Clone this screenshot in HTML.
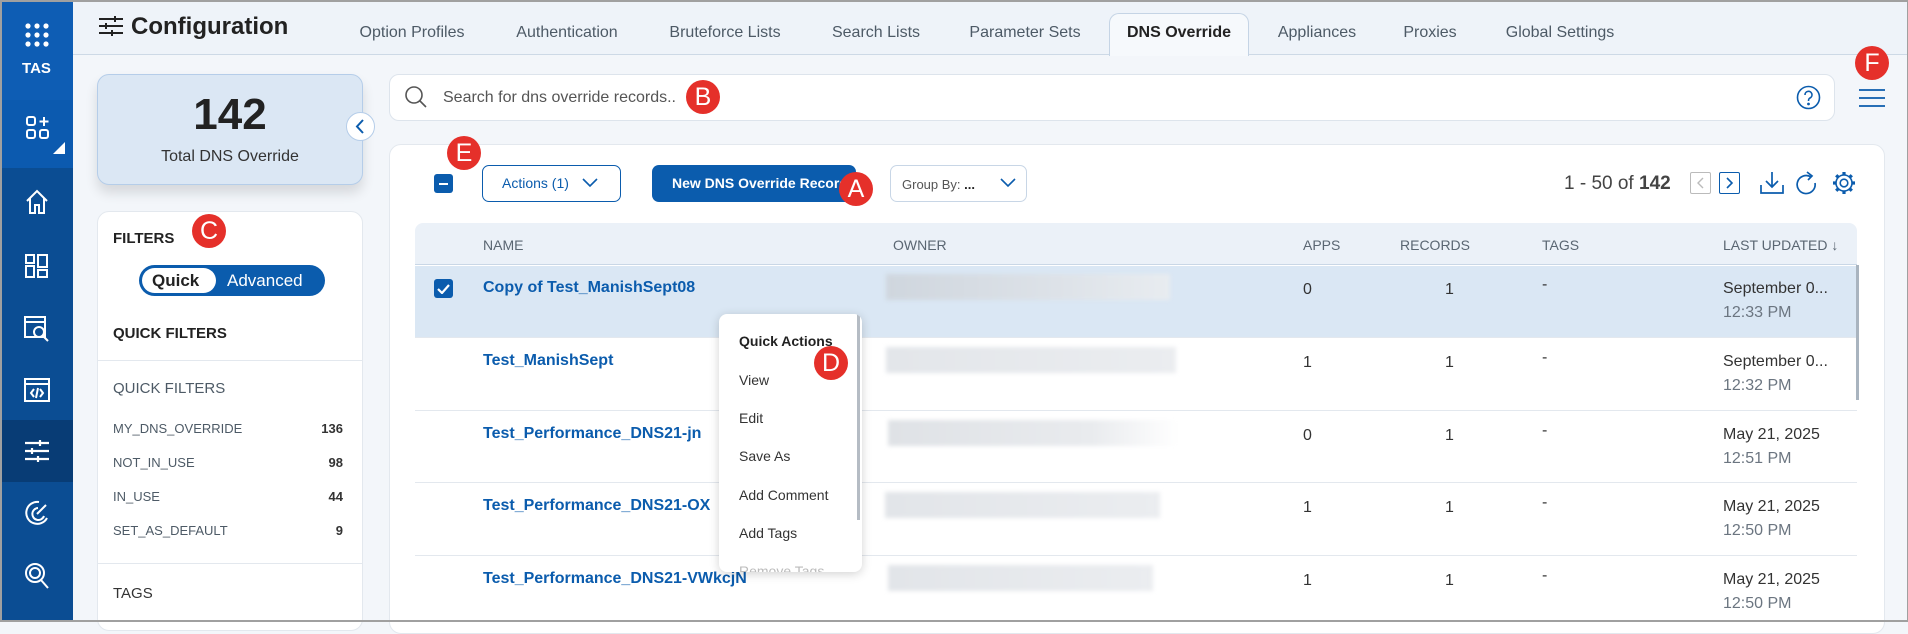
<!DOCTYPE html>
<html><head><meta charset="utf-8"><style>
*{margin:0;padding:0;box-sizing:border-box}
body{width:1908px;height:622px;overflow:hidden;background:#f3f6fa;font-family:"Liberation Sans",sans-serif;position:relative;color:#333}
.a{position:absolute}
.badge{position:absolute;width:34px;height:34px;border-radius:50%;background:#e5302a;color:#fff;font-size:25px;text-align:center;line-height:34px}
.tab{position:absolute;top:24px;font-size:16px;color:#4d5a66;transform:translateX(-50%);white-space:nowrap}
.side{position:absolute;left:0;width:73px}
.fi{position:absolute;left:16px;font-size:13px;color:#4d5a66}
.fc{position:absolute;right:20px;font-size:13px;color:#333;font-weight:bold}
.th{position:absolute;top:237px;font-size:14px;color:#5a6672}
.nm{position:absolute;left:483px;font-size:16px;color:#0b5cad;font-weight:bold}
.blur{position:absolute;height:26px;background:linear-gradient(90deg,#cfd6de,#dde2e8 60%,#e8ecf0);filter:blur(2px)}
.num{position:absolute;font-size:16px;color:#333}
.dt{position:absolute;left:1723px;font-size:16px;color:#333}
.tm{position:absolute;left:1723px;font-size:16px;color:#6b7580}
.mi{position:absolute;left:739px;font-size:14px;color:#333}
</style></head><body>
<div class="side" style="top:0;height:100px;background:#0e5db4"></div>
<div class="side" style="top:100px;height:68px;background:#0c5aaf"></div>
<div class="side" style="top:168px;height:454px;background:#0b4d93"></div>
<div class="side" style="top:420px;height:62px;background:#083c75"></div>
<svg class="a" style="left:24px;top:22px" width="26" height="26"><g fill="#fff"><circle cx="4" cy="4" r="2.6"/><circle cx="13" cy="4" r="2.6"/><circle cx="22" cy="4" r="2.6"/><circle cx="4" cy="13" r="2.6"/><circle cx="13" cy="13" r="2.6"/><circle cx="22" cy="13" r="2.6"/><circle cx="4" cy="22" r="2.6"/><circle cx="13" cy="22" r="2.6"/><circle cx="22" cy="22" r="2.6"/></g></svg>
<div class="a" style="left:0;width:73px;top:60px;text-align:center;color:#fff;font-weight:bold;font-size:15px">TAS</div>
<svg class="a" style="left:26px;top:116px" width="24" height="24" fill="none" stroke="#fff" stroke-width="2"><rect x="1" y="1" width="8" height="8" rx="2"/><rect x="1" y="14" width="8" height="8" rx="2"/><rect x="14" y="14" width="8" height="8" rx="2"/><path d="M18 1v9M13.5 5.5h9"/></svg>
<svg class="a" style="left:53px;top:142px" width="12" height="12"><path d="M12 0V12H0z" fill="#fff"/></svg>
<svg class="a" style="left:25px;top:189px" width="24" height="26" fill="none" stroke="#fff" stroke-width="2"><path d="M2 12L12 2l10 10M5 9v15h5v-8h4v8h5V9"/></svg>
<svg class="a" style="left:25px;top:254px" width="24" height="24" fill="none" stroke="#fff" stroke-width="2"><rect x="1" y="1" width="8" height="8"/><rect x="1" y="12" width="8" height="11"/><rect x="13" y="1" width="9" height="12"/><rect x="13" y="16" width="9" height="7"/></svg>
<svg class="a" style="left:24px;top:316px" width="26" height="26" fill="none" stroke="#fff" stroke-width="2"><rect x="1" y="1" width="20" height="20"/><path d="M1 6h20"/><circle cx="15" cy="16" r="5"/><path d="M19 20l5 5"/></svg>
<svg class="a" style="left:24px;top:378px" width="26" height="24" fill="none" stroke="#fff" stroke-width="2"><rect x="1" y="1" width="24" height="22"/><path d="M1 6h24M10 11l-3 4 3 4M16 11l3 4-3 4M14 10l-2 10"/></svg>
<svg class="a" style="left:24px;top:440px" width="26" height="22" fill="none" stroke="#fff" stroke-width="2.2"><path d="M1 3h24M1 11h24M1 19h24"/><path d="M16 0v6M8 8v6M14 16v6"/></svg>
<svg class="a" style="left:25px;top:500px" width="24" height="26" fill="none" stroke="#fff" stroke-width="2"><path d="M14 2A11 11 0 1 0 22 18"/><path d="M13 8a6 6 0 1 0 6 8"/><path d="M12 14l9-9"/></svg>
<svg class="a" style="left:24px;top:562px" width="26" height="28" fill="none" stroke="#fff" stroke-width="2"><circle cx="11" cy="11" r="9"/><circle cx="11" cy="11" r="5"/><path d="M17 18l7 8"/></svg>
<div class="a" style="left:73px;top:0;width:1835px;height:55px;background:#eef3f9;border-bottom:1px solid #cdd9e6"></div>
<svg class="a" style="left:99px;top:16px" width="24" height="20" fill="none" stroke="#222" stroke-width="2"><path d="M0 3h24M0 10h24M0 17h24M16 0v6M7 7v6M13 14v6"/></svg>
<div class="a" style="left:131px;top:13px;font-size:24px;font-weight:bold;color:#222">Configuration</div>
<div class="a" style="left:1109px;top:13px;width:140px;height:43px;background:#f6f9fc;border:1px solid #c5d4e5;border-bottom:none;border-radius:10px 10px 0 0"></div>
<div class="tab" style="left:412px">Option Profiles</div>
<div class="tab" style="left:567px">Authentication</div>
<div class="tab" style="left:725px">Bruteforce Lists</div>
<div class="tab" style="left:876px">Search Lists</div>
<div class="tab" style="left:1025px">Parameter Sets</div>
<div class="tab" style="left:1179px;font-weight:bold;color:#222">DNS Override</div>
<div class="tab" style="left:1317px">Appliances</div>
<div class="tab" style="left:1430px">Proxies</div>
<div class="tab" style="left:1560px">Global Settings</div>
<div class="a" style="left:97px;top:74px;width:266px;height:111px;background:#dbe7f4;border:1px solid #b5cde9;border-radius:12px;box-shadow:0 8px 12px rgba(0,0,0,.12)"></div>
<div class="a" style="left:97px;top:90px;width:266px;text-align:center;font-size:44px;font-weight:bold;color:#222">142</div>
<div class="a" style="left:97px;top:148px;width:266px;text-align:center;font-size:16px;color:#333">Total DNS Override</div>
<div class="a" style="left:346px;top:112px;width:29px;height:29px;border-radius:50%;background:#fff;border:1px solid #b5cde9"></div>
<svg class="a" style="left:355px;top:119px" width="10" height="15" fill="none" stroke="#0b5cad" stroke-width="2"><path d="M8 1L2 7.5 8 14"/></svg>
<div class="a" style="left:97px;top:211px;width:266px;height:420px;background:#fff;border:1px solid #e3e8ee;border-radius:12px"></div>
<div class="a" style="left:113px;top:230px;font-size:15px;font-weight:bold;color:#222">FILTERS</div>
<div class="a" style="left:139px;top:265px;width:186px;height:31px;border-radius:16px;background:#0b5cad"></div>
<div class="a" style="left:142px;top:268px;width:74px;height:25px;border-radius:13px;background:#fff"></div>
<div class="a" style="left:152px;top:271px;font-size:17px;font-weight:bold;color:#222">Quick</div>
<div class="a" style="left:227px;top:271px;font-size:17px;color:#fff">Advanced</div>
<div class="a" style="left:113px;top:325px;font-size:15px;font-weight:bold;color:#222">QUICK FILTERS</div>
<div class="a" style="left:97px;top:360px;width:266px;height:1px;background:#e3e8ee"></div>
<div class="a" style="left:113px;top:380px;font-size:15px;color:#4d5a66">QUICK FILTERS</div>
<div class="a" style="left:97px;top:0;width:266px">
<div class="fi" style="top:421px">MY_DNS_OVERRIDE</div><div class="fc" style="top:421px">136</div>
<div class="fi" style="top:455px">NOT_IN_USE</div><div class="fc" style="top:455px">98</div>
<div class="fi" style="top:489px">IN_USE</div><div class="fc" style="top:489px">44</div>
<div class="fi" style="top:523px">SET_AS_DEFAULT</div><div class="fc" style="top:523px">9</div>
</div>
<div class="a" style="left:97px;top:563px;width:266px;height:1px;background:#e3e8ee"></div>
<div class="a" style="left:113px;top:585px;font-size:15px;color:#333">TAGS</div>
<div class="a" style="left:389px;top:74px;width:1446px;height:47px;background:#fff;border:1px solid #dde4ec;border-radius:10px"></div>
<svg class="a" style="left:404px;top:85px" width="24" height="24" fill="none" stroke="#555" stroke-width="1.6"><circle cx="10" cy="10" r="8"/><path d="M16 16l6 6"/></svg>
<div class="a" style="left:443px;top:89px;font-size:16px;color:#555">Search for dns override records..</div>
<svg class="a" style="left:1796px;top:85px" width="25" height="25" fill="none" stroke="#0b5cad" stroke-width="1.6"><circle cx="12.5" cy="12.5" r="11"/><path d="M9 10a3.5 3.5 0 1 1 5 3c-1.3.7-1.5 1.3-1.5 3"/><circle cx="12.5" cy="19" r=".6" fill="#0b5cad"/></svg>
<svg class="a" style="left:1859px;top:89px" width="26" height="18" stroke="#0b5cad" stroke-width="1.8"><path d="M0 1h26M0 9h26M0 17h26"/></svg>
<div class="a" style="left:389px;top:144px;width:1496px;height:490px;background:#fff;border:1px solid #e3e8ee;border-radius:12px"></div>
<div class="a" style="left:434px;top:174px;width:19px;height:19px;border-radius:3px;background:#0b5cad"></div>
<div class="a" style="left:439px;top:183px;width:9px;height:2px;background:#fff"></div>
<div class="a" style="left:482px;top:165px;width:139px;height:37px;border:1px solid #0b5cad;border-radius:7px"></div>
<div class="a" style="left:502px;top:175px;font-size:14px;color:#0b5cad">Actions (1)</div>
<svg class="a" style="left:582px;top:178px" width="16" height="10" fill="none" stroke="#0b5cad" stroke-width="1.6"><path d="M1 1l7 7 7-7"/></svg>
<div class="a" style="left:652px;top:165px;width:204px;height:37px;background:#0b5cad;border-radius:7px"></div>
<div class="a" style="left:672px;top:175px;font-size:14px;font-weight:bold;color:#fff">New DNS Override Record</div>
<div class="a" style="left:890px;top:165px;width:137px;height:37px;border:1px solid #c8d6e6;border-radius:7px"></div>
<div class="a" style="left:902px;top:177px;font-size:13px;color:#555">Group By: <b style="color:#222">...</b></div>
<svg class="a" style="left:1000px;top:178px" width="16" height="10" fill="none" stroke="#0b5cad" stroke-width="1.6"><path d="M1 1l7 7 7-7"/></svg>
<div class="a" style="left:1564px;top:173px;font-size:19px;color:#444">1 - 50 of <b style="color:#444">142</b></div>
<div class="a" style="left:1690px;top:172px;width:21px;height:22px;border:1px solid #bbb;border-radius:2px"></div>
<svg class="a" style="left:1696px;top:177px" width="9" height="12" fill="none" stroke="#bbb" stroke-width="1.4"><path d="M7 1L2 6l5 5"/></svg>
<div class="a" style="left:1719px;top:172px;width:21px;height:22px;border:1.5px solid #0b5cad;border-radius:2px"></div>
<svg class="a" style="left:1725px;top:177px" width="9" height="12" fill="none" stroke="#0b5cad" stroke-width="1.6"><path d="M2 1l5 5-5 5"/></svg>
<svg class="a" style="left:1760px;top:171px" width="24" height="24" fill="none" stroke="#0b5cad" stroke-width="1.7"><path d="M1 14v8h22v-8M12 1v15M6 10l6 6 6-6"/></svg>
<svg class="a" style="left:1796px;top:171px" width="22" height="26" fill="none" stroke="#0b5cad" stroke-width="1.7"><path d="M15 6A9 9 0 1 0 19 12"/><path d="M11 1l5 4-4 4"/></svg>
<svg class="a" style="left:1831px;top:170px" width="26" height="26" viewBox="0 0 26 26" fill="none" stroke="#0b5cad" stroke-width="1.6"><circle cx="13" cy="13" r="3.8"/><circle cx="13" cy="13" r="8"/><g stroke-width="3.2" stroke-linecap="butt"><path d="M13 2v3M13 21v3M2 13h3M21 13h3M5.2 5.2l2.1 2.1M18.7 18.7l2.1 2.1M5.2 20.8l2.1-2.1M18.7 7.3l2.1-2.1"/></g></svg>
<div class="a" style="left:415px;top:223px;width:1442px;height:42px;background:#ebf1f8;border-radius:8px 8px 0 0;border-bottom:1px solid #c9d7e6"></div>
<div class="th" style="left:483px">NAME</div>
<div class="th" style="left:893px">OWNER</div>
<div class="th" style="left:1303px">APPS</div>
<div class="th" style="left:1400px">RECORDS</div>
<div class="th" style="left:1542px">TAGS</div>
<div class="th" style="left:1723px">LAST UPDATED ↓</div>
<div class="a" style="left:415px;top:266px;width:1442px;height:71px;background:#dae7f4"></div>
<div class="a" style="left:415px;top:337px;width:1442px;height:1px;background:#e3e8ee"></div>
<div class="a" style="left:415px;top:410px;width:1442px;height:1px;background:#e3e8ee"></div>
<div class="a" style="left:415px;top:482px;width:1442px;height:1px;background:#e3e8ee"></div>
<div class="a" style="left:415px;top:555px;width:1442px;height:1px;background:#e3e8ee"></div>
<div class="a" style="left:1856px;top:265px;width:3px;height:135px;background:#a9b4bf"></div>
<div class="a" style="left:434px;top:279px;width:19px;height:19px;border-radius:3px;background:#0b5cad"></div>
<svg class="a" style="left:437px;top:283px" width="13" height="11" fill="none" stroke="#fff" stroke-width="2.2"><path d="M1 6l4 4 7-8"/></svg>
<div class="nm" style="top:279px">Copy of Test_ManishSept08</div>
<div class="nm" style="top:352px">Test_ManishSept</div>
<div class="nm" style="top:425px">Test_Performance_DNS21-jn</div>
<div class="nm" style="top:497px">Test_Performance_DNS21-OX</div>
<div class="nm" style="top:570px">Test_Performance_DNS21-VWkcjN</div>
<div class="blur" style="left:886px;top:274px;width:284px"></div>
<div class="blur" style="left:886px;top:347px;width:290px;background:linear-gradient(90deg,#e3e6ea,#ebedf0)"></div>
<div class="blur" style="left:888px;top:420px;width:290px;background:linear-gradient(90deg,#dfe2e6,#e9ebee 70%,#fff)"></div>
<div class="blur" style="left:885px;top:492px;width:275px;background:linear-gradient(90deg,#e2e5e9,#ebedf0)"></div>
<div class="blur" style="left:888px;top:565px;width:265px;background:linear-gradient(90deg,#e2e5e9,#ebedf0)"></div>
<div class="num" style="left:1303px;top:281px">0</div><div class="num" style="left:1445px;top:281px">1</div><div class="num" style="left:1542px;top:276px">-</div>
<div class="num" style="left:1303px;top:354px">1</div><div class="num" style="left:1445px;top:354px">1</div><div class="num" style="left:1542px;top:349px">-</div>
<div class="num" style="left:1303px;top:427px">0</div><div class="num" style="left:1445px;top:427px">1</div><div class="num" style="left:1542px;top:422px">-</div>
<div class="num" style="left:1303px;top:499px">1</div><div class="num" style="left:1445px;top:499px">1</div><div class="num" style="left:1542px;top:494px">-</div>
<div class="num" style="left:1303px;top:572px">1</div><div class="num" style="left:1445px;top:572px">1</div><div class="num" style="left:1542px;top:567px">-</div>
<div class="dt" style="top:280px">September 0...</div><div class="tm" style="top:304px">12:33 PM</div>
<div class="dt" style="top:353px">September 0...</div><div class="tm" style="top:377px">12:32 PM</div>
<div class="dt" style="top:426px">May 21, 2025</div><div class="tm" style="top:450px">12:51 PM</div>
<div class="dt" style="top:498px">May 21, 2025</div><div class="tm" style="top:522px">12:50 PM</div>
<div class="dt" style="top:571px">May 21, 2025</div><div class="tm" style="top:595px">12:50 PM</div>
<div class="a" style="left:719px;top:314px;width:143px;height:258px;background:#fff;border-radius:8px;box-shadow:0 2px 10px rgba(0,0,0,.18);overflow:hidden">
<div class="a" style="right:2px;top:0;width:3px;height:206px;background:#b5bcc4"></div>
</div>
<div class="mi" style="top:333px;font-weight:bold;color:#222">Quick Actions</div>
<div class="mi" style="top:372px">View</div>
<div class="mi" style="top:410px">Edit</div>
<div class="mi" style="top:448px">Save As</div>
<div class="mi" style="top:487px">Add Comment</div>
<div class="mi" style="top:525px">Add Tags</div>
<div class="a" style="left:739px;top:562px;height:10px;overflow:hidden;font-size:14px;color:#bbb;line-height:18px">Remove Tags</div>
<div class="badge" style="left:839px;top:172px">A</div>
<div class="badge" style="left:686px;top:80px">B</div>
<div class="badge" style="left:192px;top:214px">C</div>
<div class="badge" style="left:814px;top:346px">D</div>
<div class="badge" style="left:447px;top:136px">E</div>
<div class="badge" style="left:1855px;top:46px">F</div>
<div class="a" style="left:0;top:0;width:1908px;height:622px;border:2px solid #a0a0a0;border-right-width:1px"></div>
</body></html>
